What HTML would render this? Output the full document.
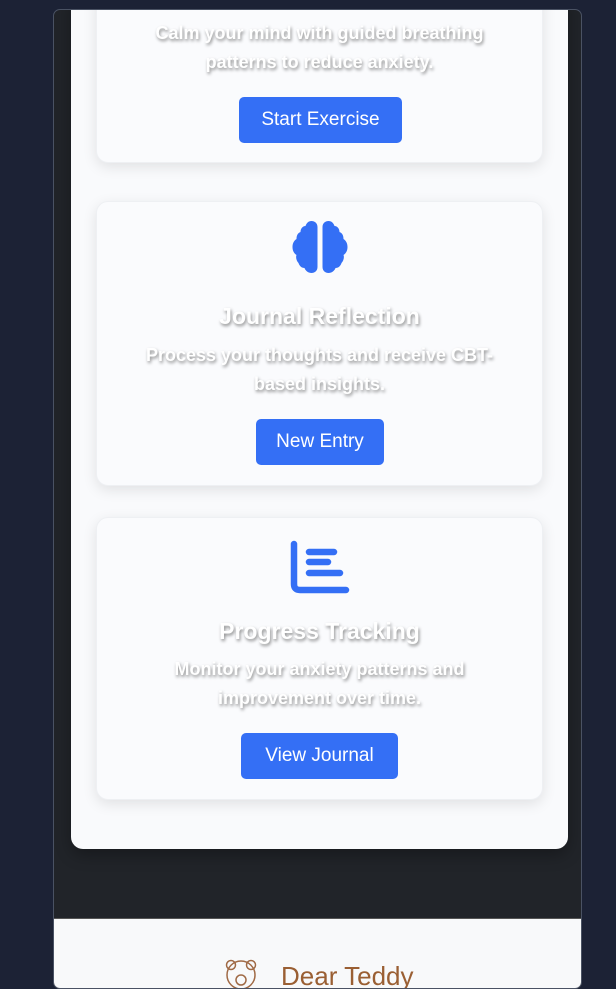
<!DOCTYPE html>
<html><head><style>
*{margin:0;padding:0;box-sizing:border-box}
body{width:616px;height:980px;background:#1c2235;position:relative;overflow:hidden;font-family:"Liberation Sans",sans-serif}
.frame{position:absolute;left:53px;top:9px;width:529px;height:980px;border:1px solid #4a5263;border-radius:7px;background:#212429;overflow:hidden}
.big{position:absolute;left:17px;top:-20px;width:497px;height:859px;background:#f9fafc;border-radius:12px;box-shadow:0 6px 16px rgba(0,0,0,.3)}
.card{position:absolute;left:25px;width:447px;background:#fafbfd;border-radius:12px;box-shadow:0 4px 14px rgba(0,0,0,.1);border:1px solid #eef0f3;text-align:center}
.t{color:#fff;font-weight:bold;font-size:23px;text-shadow:1px 2px 3px rgba(0,0,0,.45);position:absolute;left:0;right:0}
.d{color:#fff;font-weight:bold;font-size:18px;line-height:29px;text-shadow:1px 2px 3px rgba(0,0,0,.45);position:absolute;left:42px;right:42px}
.b{position:absolute;background:#346ff5;color:#fff;font-size:19px;border-radius:5px;display:flex;align-items:center;justify-content:center}
.foot{position:absolute;left:0;top:908px;width:100%;height:100px;background:#f8f9fa;border-top:1px solid #555}
</style></head><body>
<div class="frame">
 <div class="big">
  <div class="card" style="top:0;height:173px">
   <div class="d" style="top:28px">Calm your mind with guided breathing patterns to reduce anxiety.</div>
   <div class="b" style="left:142px;top:106px;width:163px;height:46px">Start Exercise</div>
  </div>
  <div class="card" style="top:211px;height:285px">
   <svg style="position:absolute;left:193px;top:19px" width="60" height="60" viewBox="0 0 59 60"><g fill="#346ff5"><path d="M27 6c0-4-3-6-6-6s-5 2-6 5c-3 0-5 3-5 6-3 1-4 4-4 7-3 2-4 5-4 8 0 3 1 6 4 8-1 2 0 6 2 8 1 3 3 5 6 5 1 3 4 5 7 5s6-2 6-6z"/><path d="M32 6c0-4 3-6 6-6s5 2 6 5c3 0 5 3 5 6 3 1 4 4 4 7 3 2 4 5 4 8 0 3-1 6-4 8 1 2 0 6-2 8-1 3-3 5-6 5-1 3-4 5-7 5s-6-2-6-6z"/></g></svg>
   <div class="t" style="top:101px">Journal Reflection</div>
   <div class="d" style="top:139px">Process your thoughts and receive CBT-based insights.</div>
   <div class="b" style="left:159px;top:217px;width:128px;height:46px">New Entry</div>
  </div>
  <div class="card" style="top:527px;height:283px">
   <svg style="position:absolute;left:193px;top:22px" width="62" height="56" viewBox="0 0 62 56"><g stroke="#346ff5" stroke-width="6.5" stroke-linecap="round" fill="none"><path d="M4 4v40q0 6 6 6h46"/><path d="M19 12h25M19 22h19M19 33h31"/></g></svg>
   <div class="t" style="top:100px">Progress Tracking</div>
   <div class="d" style="top:137px">Monitor your anxiety patterns and improvement over time.</div>
   <div class="b" style="left:144px;top:215px;width:157px;height:46px">View Journal</div>
  </div>
 </div>
 <div class="foot">
  <svg style="position:absolute;left:170px;top:38px" width="34" height="34" viewBox="0 0 34 34"><g stroke="#a06a45" stroke-width="1.5" fill="none"><circle cx="17" cy="18" r="14"/><circle cx="7" cy="8" r="4.5"/><circle cx="27" cy="8" r="4.5"/><circle cx="17" cy="23" r="5"/></g></svg>
  <div style="position:absolute;left:227px;top:42px;font-size:26px;color:#9a5f33">Dear Teddy</div>
 </div>
</div>
</body></html>
